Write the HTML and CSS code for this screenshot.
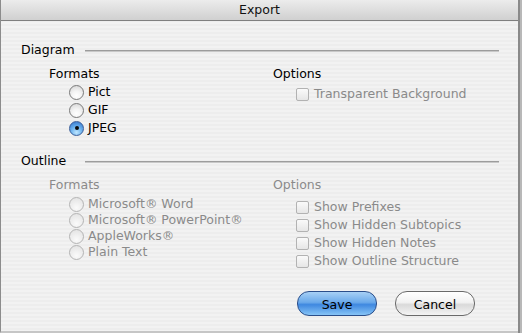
FILE: index.html
```html
<!DOCTYPE html>
<html>
<head>
<meta charset="utf-8">
<link rel="stylesheet" href="styles.css">
</head>
<body>
<div class="desk">
  <div class="window">
    <div class="titlebar">Export</div>
    <div class="content">
      <div class="section-head"><span>Diagram</span><div class="rule"></div></div>
      <div class="cols">
        <div class="col col-left">
          <div class="label">Formats</div>
          <div class="list radios big">
            <div class="item"><span class="radio"></span>Pict</div>
            <div class="item"><span class="radio"></span>GIF</div>
            <div class="item"><span class="radio on"></span>JPEG</div>
          </div>
        </div>
        <div class="col col-right">
          <div class="label">Options</div>
          <div class="list">
            <div class="item dis"><span class="check"></span>Transparent Background</div>
          </div>
        </div>
      </div>
      <div class="section-head outline"><span>Outline</span><div class="rule"></div></div>
      <div class="cols">
        <div class="col col-left">
          <div class="label dis">Formats</div>
          <div class="list radios small">
            <div class="item dis"><span class="radio"></span>Microsoft® Word</div>
            <div class="item dis"><span class="radio"></span>Microsoft® PowerPoint®</div>
            <div class="item dis"><span class="radio"></span>AppleWorks®</div>
            <div class="item dis"><span class="radio"></span>Plain Text</div>
          </div>
        </div>
        <div class="col col-right">
          <div class="label dis">Options</div>
          <div class="list checks">
            <div class="item dis"><span class="check"></span>Show Prefixes</div>
            <div class="item dis"><span class="check"></span>Show Hidden Subtopics</div>
            <div class="item dis"><span class="check"></span>Show Hidden Notes</div>
            <div class="item dis"><span class="check"></span>Show Outline Structure</div>
          </div>
        </div>
      </div>
      <div class="buttons">
        <button class="btn default">Save</button>
        <button class="btn">Cancel</button>
      </div>
    </div>
  </div>
  <div class="side"></div>
</div>
</body>
</html>
```

FILE: styles.css
```css
html, body {
  margin: 0;
  padding: 0;
  width: 522px;
  height: 333px;
  overflow: hidden;
  background: #9a9a9a;
  font-family: "DejaVu Sans", "Lucida Grande", sans-serif;
  font-size: 12.5px;
  color: #000;
}
.desk {
  display: flex;
  height: 333px;
}
.window {
  width: 517px;
  height: 331px;
  border-left: 1px solid #8c8c8c;
  border-bottom: 2px solid #c6c6c6;
  display: flex;
  flex-direction: column;
  background: repeating-linear-gradient(to bottom, #ededed 0px, #ededed 2px, #f2f2f2 2px, #f2f2f2 4px);
}
.side {
  width: 4px;
  background: linear-gradient(to right, #8a8a8a 0, #8a8a8a 2px, #b8b8b8 2px);
}
.titlebar {
  height: 20px;
  border-bottom: 1px solid #7f7f7f;
  background: linear-gradient(to bottom, #ececec, #d0d0d0);
  text-align: center;
  line-height: 20px;
  font-size: 12.5px;
  color: #111;
  border-radius: 4px 4px 0 0;
}
.content {
  padding: 21px 19px 0 20px;
  display: flex;
  flex-direction: column;
}
.section-head {
  display: flex;
  align-items: center;
  height: 16px;
  line-height: 16px;
}
.section-head span {
  width: 64px;
}
.rule {
  flex: 1;
  height: 1px;
  border-top: 1px solid #9c9c9c;
  background: #c8c8c8;
  margin-top: 1px;
}
.section-head.outline {
  margin-top: 14px;
}
.cols {
  display: grid;
  grid-template-columns: 224px 1fr;
  padding-left: 28px;
  margin-top: 8px;
}
.label {
  height: 16px;
  line-height: 16px;
}
.dis {
  color: #8a8a8a;
}
.list {
  display: flex;
  flex-direction: column;
  margin-top: 3px;
}
.list.big {
  margin-top: 1px;
  margin-bottom: 2px;
}
.list.checks {
  margin-top: 5px;
}
.item {
  display: flex;
  align-items: center;
  height: 18px;
  line-height: 18px;
  padding-left: 21px;
  white-space: nowrap;
}
.radios .item {
  padding-left: 20px;
}
.radios.small .item {
  height: 16px;
  line-height: 16px;
}
.col-right .item {
  padding-left: 23px;
}
.radio {
  width: 15px;
  height: 15px;
  border-radius: 50%;
  box-sizing: border-box;
  border: 1px solid #7a7a7a;
  background: radial-gradient(circle at 50% 75%, #ffffff 0, #f4f4f4 40%, #d2d2d2 100%);
  margin-right: 4px;
  position: relative;
  flex: none;
}
.item.dis .radio {
  border-color: #b4b4b4;
  background: radial-gradient(circle at 50% 75%, #fafafa 0, #f0f0f0 40%, #e0e0e0 100%);
}
.radio.on {
  border-color: #3a5e9a;
  background: radial-gradient(circle at 50% 80%, #bfe6ff 0, #6cb2ee 45%, #2f6fc7 100%);
}
.radio.on::after {
  content: "";
  position: absolute;
  left: 4.5px;
  top: 4.5px;
  width: 4px;
  height: 4px;
  border-radius: 50%;
  background: #0a0a0a;
}
.check {
  width: 13px;
  height: 13px;
  box-sizing: border-box;
  border: 1px solid #b2b2b2;
  border-radius: 2px;
  background: linear-gradient(to bottom, #fafafa, #e6e6e6);
  margin-right: 5px;
  flex: none;
}
.buttons {
  display: flex;
  justify-content: flex-end;
  gap: 18px;
  margin-top: 21px;
  padding-right: 24px;
}
.btn {
  width: 80px;
  height: 25px;
  border-radius: 12px;
  font-family: "DejaVu Sans", sans-serif;
  font-size: 12.5px;
  color: #000;
  border: 1px solid #6a6a6a;
  background: linear-gradient(to bottom, #ffffff 0%, #f2f2f2 45%, #dadada 55%, #f4f4f4 100%);
  padding: 1px 0 0;
}
.btn.default {
  border-color: #2b4e8a;
  background: linear-gradient(to bottom, #a7d0f5 0%, #6aa9ea 45%, #3f88e0 55%, #86c4f6 100%);
}
```
